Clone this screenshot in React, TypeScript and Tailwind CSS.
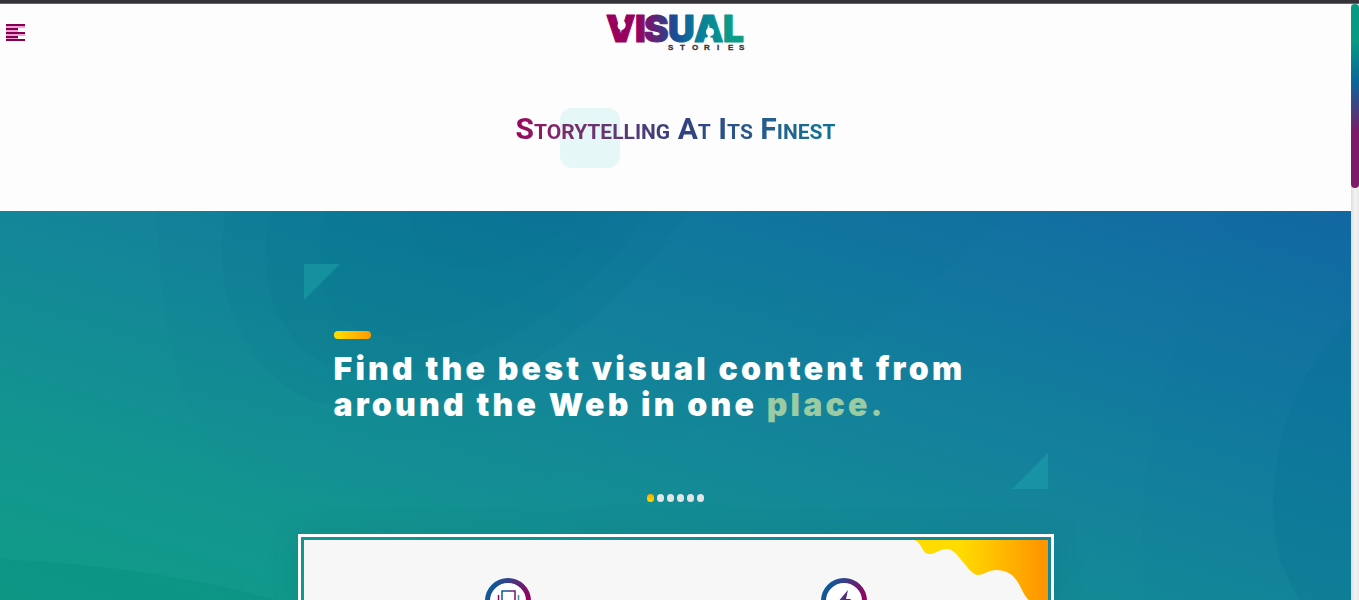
const dots = [0, 1, 2, 3, 4, 5];

function Logo() {
  return (
    <svg viewBox="0 0 140 38" className="h-[38px] w-[140px] overflow-visible" role="img" aria-label="Visual Stories">
      <defs>
        <linearGradient id="logo" gradientUnits="userSpaceOnUse" x1="0" y1="0" x2="140" y2="0">
          <stop offset="0.22" stopColor="#98005d" />
          <stop offset="0.5" stopColor="#184f94" />
          <stop offset="0.65" stopColor="#087c9c" />
          <stop offset="0.9" stopColor="#0b9d85" />
        </linearGradient>
      </defs>
      <text
        x="0 29 38 62 88 117"
        y="28"
        fontFamily="Inter, sans-serif"
        fontWeight="900"
        fontSize="37"
        fill="url(#logo)"
        stroke="url(#logo)"
        strokeWidth="1"
        strokeLinejoin="round"
      >
        VISUAL
      </text>
      <path d="M9 0H20C19 3 18 4 18 7C21 10 20 15 16 16C12 16 10 12 13 8C14 5 11 3 9 0Z" fill="#fdfdfd" />
      <circle cx="104" cy="18" r="4" fill="#fdfdfd" />
      <path d="M104 18L98 30H105Z" fill="#fdfdfd" />
      <text
        x="62 74 86 98 111 122 133"
        y="36"
        fontFamily="Liberation Sans, sans-serif"
        fontWeight="700"
        fontSize="8"
        fill="#333333"
        stroke="#333333"
        strokeWidth="0.3"
      >
        STORIES
      </text>
    </svg>
  );
}

function Waves() {
  return (
    <svg
      viewBox="0 0 1351 389"
      preserveAspectRatio="none"
      className="absolute inset-0 h-full w-full"
      aria-hidden="true"
    >
      <defs>
        <linearGradient id="fade" x1="0" y1="0" x2="0" y2="1">
          <stop offset="0" stopColor="#006f8e" stopOpacity="0.12" />
          <stop offset="1" stopColor="#006f8e" stopOpacity="0" />
        </linearGradient>
      </defs>
      <path d="M157 0 C160 110 180 200 230 250 C480 330 820 190 1010 0Z" fill="url(#fade)" />
      <g fill="#006f8e" fillOpacity="0.1">
        <path d="M226 0 C210 80 245 150 310 178 C450 215 600 120 690 0Z" />
        <path d="M271 0 C250 80 290 160 390 155 C500 145 600 70 650 0Z" />
      </g>
      <g fill="#006f8e" fillOpacity="0.08">
        <path d="M325 0 C310 50 325 110 370 115 C480 120 570 60 620 0Z" />
        <path d="M413 0 C407 28 425 55 470 55 C520 50 560 25 585 0Z" />
      </g>
      <path d="M1230 0 C1175 100 1145 210 1142 300 L1145 389 H1351 V0Z" fill="#006ca0" fillOpacity="0.05" />
      <path d="M1351 100 C1285 160 1260 250 1280 330 L1310 389 H1351Z" fill="#007090" fillOpacity="0.2" />
      <path d="M0 328 C100 332 205 345 300 373 V389 H0Z" fill="#008878" fillOpacity="0.25" />
    </svg>
  );
}

function BadgeGradient({ id }: { id: string }) {
  return (
    <defs>
      <linearGradient id={id} x1="0" y1="0" x2="1" y2="0.6">
        <stop offset="0.1" stopColor="#085e9c" />
        <stop offset="0.85" stopColor="#8a0862" />
        <stop offset="1" stopColor="#98005d" />
      </linearGradient>
    </defs>
  );
}

function StoriesIcon() {
  return (
    <svg viewBox="0 0 46 46" className="size-[46px]" fill="none" role="img" aria-label="Stories">
      <BadgeGradient id="stories" />
      <circle cx="23" cy="23" r="20.5" fill="#fff" stroke="url(#stories)" strokeWidth="5" />
      <path d="M17 13H30V32H17Z" stroke="url(#stories)" strokeWidth="1.5" />
      <path d="M13.5 17V29" stroke="#98005d" strokeWidth="1.5" />
      <path d="M33.5 17V29" stroke="#4787b3" strokeWidth="1.5" />
    </svg>
  );
}

function BoltIcon() {
  return (
    <svg viewBox="0 0 46 46" className="size-[46px]" fill="none" role="img" aria-label="Fast">
      <BadgeGradient id="bolt" />
      <circle cx="23" cy="23" r="20.5" fill="#fff" stroke="url(#bolt)" strokeWidth="5" />
      <path d="M27 12L16 25H22L19 35L30 21H25Z" fill="url(#bolt)" />
    </svg>
  );
}

export default function App() {
  return (
    <div className="flex h-screen flex-col overflow-hidden bg-[#fdfdfd] font-['Roboto',sans-serif]">
      <div className="h-1 shrink-0 border-b border-[#66646a] bg-[#353339]" />
      <div className="flex min-h-0 flex-1">
        <div className="flex min-w-0 flex-1 flex-col">
          <header className="grid h-[58px] shrink-0 grid-cols-[1fr_auto_1fr] items-center px-1.5">
            <button type="button" aria-label="Open menu" className="w-5">
              <svg viewBox="0 0 20 18" className="h-[18px] w-5" shapeRendering="crispEdges">
                <path d="M0 3H19M0 7H12M0 11H19M0 15H12" stroke="#efa3d4" strokeWidth="2" />
                <path d="M0 1H19M0 5H12M0 9H19M0 13H12M0 16H19" stroke="#850052" strokeWidth="2" />
              </svg>
            </button>
            <a href="#home">
              <Logo />
            </a>
          </header>
          <section className="flex h-[149px] shrink-0 justify-center pt-[46px]">
            <div className="relative">
              <span className="absolute left-11 top-0 size-[60px] rounded-xl bg-[#e6f7f8]" />
              <h1 className="relative bg-linear-to-r from-[#98005d] via-[#31407f] to-[#087496] bg-clip-text text-[21px] leading-[42px] font-bold text-transparent uppercase">
                <span className="text-[30px]">S</span>torytelling<span className="text-[30px]"> A</span>t
                <span className="text-[30px]"> I</span>ts<span className="text-[30px]"> F</span>inest
              </h1>
            </div>
          </section>
          <main className="relative flex flex-1 flex-col items-center bg-[linear-gradient(to_top_right,#109c86_0%,#12978e_20%,#148699_50%,#1276a0_78%,#1267a3_100%)] pt-[53px]">
            <Waves />
            <section className="relative flex h-[225px] w-full max-w-[744px] flex-col px-[30px] pt-[67px]">
              <svg viewBox="0 0 36 36" className="absolute left-0 top-0 size-9" aria-hidden="true">
                <path d="M0 0H36L0 36Z" fill="#14919d" />
              </svg>
              <span className="h-2 w-[37px] rounded bg-linear-to-r from-[#ffe000] to-[#ff9800]" />
              <h2 className="mt-3 font-['Inter',sans-serif] text-[32px] leading-9 font-black tracking-widest text-white">
                Find the best visual content from
                <br />
                around the Web in one <span className="text-[#9acba2]">place.</span>
              </h2>
              <svg viewBox="0 0 36 36" className="absolute right-0 bottom-0 size-9" aria-hidden="true">
                <path d="M36 0V36H0Z" fill="#1893a5" />
              </svg>
            </section>
            <div className="relative mt-[5px] flex gap-[3px]">
              {dots.map((dot) => (
                <button
                  key={dot}
                  type="button"
                  aria-label={"Slide " + (dot + 1)}
                  className={
                    dot === 0
                      ? "h-2 w-[7px] rounded-full bg-linear-to-b from-[#ffa500] to-[#ffe000]"
                      : "h-2 w-[7px] rounded-full bg-[#e2e4e6]"
                  }
                />
              ))}
            </div>
            <section className="relative mt-8 w-full max-w-[756px] flex-1 border-[3px] border-b-0 border-white px-[3px] pt-[3px] shadow-[0_0_30px_rgba(0,70,80,0.15)]">
              <div className="relative grid h-full grid-cols-2 overflow-hidden bg-[#f7f7f7] px-9 pt-[38px]">
                <svg viewBox="0 0 134 62" className="absolute right-0 top-0 h-[62px] w-[134px]" aria-hidden="true">
                  <defs>
                    <linearGradient id="drip">
                      <stop offset="0.35" stopColor="#ffdb00" />
                      <stop offset="0.97" stopColor="#ff9500" />
                    </linearGradient>
                  </defs>
                  <path
                    d="M0 0C8 2 8 14 15 14C22 14 27 8 34 9C44 10 55 35 64 35C70 35 74 30 83 30C107 31 105 54 117 62H134V0Z"
                    fill="url(#drip)"
                  />
                </svg>
                <div className="flex justify-center">
                  <StoriesIcon />
                </div>
                <div className="flex justify-center">
                  <BoltIcon />
                </div>
              </div>
            </section>
          </main>
        </div>
        <div className="w-2 shrink-0 bg-[linear-gradient(90deg,#dddddd,#f3f3f3_50%,#e8e8e8)]">
          <div className="h-[184px] rounded bg-[linear-gradient(180deg,#079a83_20%,#07679a_42%,#7d1b68_70%,#7d1b68)]" />
        </div>
      </div>
    </div>
  );
}
